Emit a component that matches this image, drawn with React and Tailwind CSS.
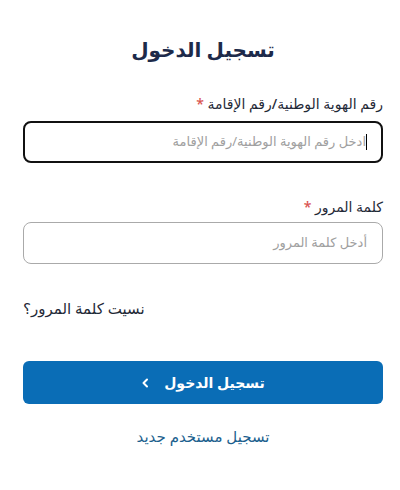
import React from 'react';

export default function App() {
  return (
    <div dir="rtl" className="w-[400px] h-[490px] bg-white pl-[23px] pr-[17px] font-['Noto_Sans','DejaVu_Sans',sans-serif]">
      <h1 className="pt-[36px] text-center text-[20px] font-bold leading-[28px] text-[#1d2a4a]">تسجيل الدخول</h1>

      <label className="mt-[30px] block text-[14px] font-medium leading-[20px] text-[#1f2937]">
        رقم الهوية الوطنية/رقم الإقامة <span className="text-[#d9534f]">*</span>
      </label>
      <div className="mt-[7px] flex h-[42px] items-center rounded-[8px] border-2 border-[#111] px-[14px]">
        <span className="h-[16px] w-px bg-black"></span>
        <input
          className="w-full bg-transparent text-[13px] text-[#222] outline-none placeholder:text-[#a0a0a0]"
          placeholder="ادخل رقم الهوية الوطنية/رقم الإقامة"
        />
      </div>

      <label className="mt-[34px] block text-[14px] font-medium leading-[20px] text-[#1f2937]">
        كلمة المرور <span className="text-[#d9534f]">*</span>
      </label>
      <div className="mt-[5px] flex h-[42px] items-center rounded-[8px] border border-[#aaa] px-[15px]">
        <input
          type="password"
          className="w-full bg-transparent text-[13px] outline-none placeholder:text-[#a0a0a0]"
          placeholder="أدخل كلمة المرور"
        />
      </div>

      <div className="mt-[32px] flex justify-end">
        <a className="text-[15px] font-medium leading-[24px] text-[#1f2937]">نسيت كلمة المرور؟</a>
      </div>

      <button className="mt-[41px] flex h-[43px] w-full items-center justify-center gap-[14px] rounded-[6px] bg-[#0a6db6] text-[14px] font-bold text-white">
        <span>تسجيل الدخول</span>
        <svg width="9" height="10" viewBox="0 0 9 10" fill="none" stroke="white" strokeWidth="2" strokeLinecap="round" strokeLinejoin="round">
          <path d="M6 1.5 2.5 5 6 8.5" />
        </svg>
      </button>

      <p className="mt-[20px] text-center text-[15px] font-medium leading-[24px] text-[#1c5f8e]">تسجيل مستخدم جديد</p>
    </div>
  );
}
